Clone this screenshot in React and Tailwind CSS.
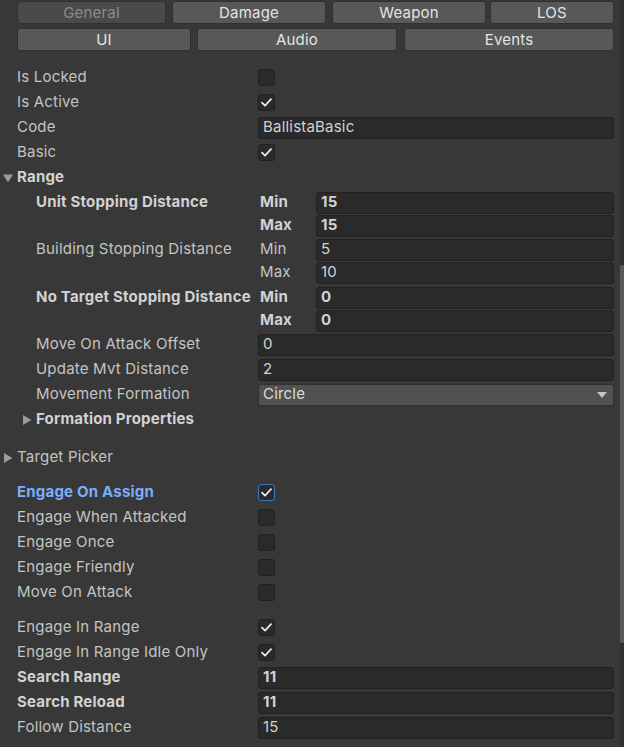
import React from "react";

const font = { fontFamily: "Inter, 'Noto Sans', sans-serif" };

const Check = () => (
  <svg width="11" height="9" viewBox="0 0 11 9" fill="none">
    <path d="M1 4.6 L4 7.6 L10 1.2" stroke="#e8e8e8" strokeWidth="1.8" strokeLinecap="round" strokeLinejoin="round" />
  </svg>
);

const Checkbox = ({ checked, focus }) => (
  <div
    className={`w-[17px] h-[17px] rounded-[3px] flex items-center justify-center bg-[#2a2a2a] border ${
      focus ? "border-[#3a79bb]" : "border-[#212121]"
    }`}
  >
    {checked && <Check />}
  </div>
);

const Field = ({ value, bold }) => (
  <div
    className={`flex-1 h-[22px] rounded-[3px] bg-[#2a2a2a] border border-[#212121] pl-[4px] flex items-center text-[15px] text-[#d2d2d2] ${
      bold ? "font-bold" : ""
    }`}
  >
    {value}
  </div>
);

const Row = ({ label, indent, bold, blue, children }) => (
  <div className="h-[25px] flex items-center">
    <div
      className={`w-[258px] shrink-0 text-[15px] whitespace-nowrap ${indent ? "pl-[36px]" : "pl-[17px]"} ${
        bold ? "font-bold" : ""
      } ${blue ? "text-[#7baefa]" : bold ? "text-[#d2d2d2]" : "text-[#c4c4c4]"}`}
    >
      {label}
    </div>
    <div className="flex-1 flex items-center">{children}</div>
  </div>
);

const Foldout = ({ label, open, indent }) => (
  <div className="h-[25px] flex items-center">
    <div className={`flex items-center ${indent ? "pl-[22px]" : "pl-[3px]"}`}>
      <svg width="10" height="10" viewBox="0 0 10 10" className="mr-[4px]">
        {open ? <path d="M0 1.5 L10 1.5 L5 9.5 Z" fill="#9a9a9a" /> : <path d="M1 0 L9.5 5 L1 10 Z" fill="#9a9a9a" />}
      </svg>
      <span className={`text-[15px] ${open || indent ? "font-bold text-[#d2d2d2]" : "text-[#c4c4c4]"}`}>{label}</span>
    </div>
  </div>
);

const MinMax = ({ label, bold, min, max, top = "pt-[1px]" }) => (
  <div className={`flex flex-col ${top}`}>
    {[
      ["Min", min],
      ["Max", max],
    ].map(([k, v], i) => (
      <div key={k} className="h-[23px] flex items-center">
        <div
          className={`w-[260px] shrink-0 pl-[36px] text-[15px] whitespace-nowrap ${
            bold ? "font-bold text-[#d2d2d2]" : "text-[#c4c4c4]"
          }`}
        >
          {i === 0 ? label : ""}
        </div>
        <div className={`w-[56px] shrink-0 text-[15px] ${bold ? "font-bold text-[#d2d2d2]" : "text-[#c4c4c4]"}`}>{k}</div>
        <Field value={v} bold={bold} />
      </div>
    ))}
  </div>
);

const Btn = ({ label, w, dim }) => (
  <div
    className={`h-[23px] pt-[1px] rounded-[3px] border border-[#303030] flex items-center justify-center text-[15px] shrink-0 ${
      dim ? "bg-[#4a4a4a] text-[#8c8c8c]" : "bg-[#585858] text-[#e4e4e4]"
    }`}
    style={{ width: w }}
  >
    {label}
  </div>
);

export default function App() {
  return (
    <div className="w-[624px] h-[747px] bg-[#383838] flex overflow-hidden tracking-[0.2px]" style={font}>
      <div className="flex-1 pr-[6px]">
        <div className="pt-[1px] pl-[17px] flex flex-col gap-[4px]">
          <div className="flex">
            <Btn label="General" w={149} dim />
            <div className="w-[6px]" />
            <Btn label="Damage" w={154} />
            <div className="w-[6px]" />
            <Btn label="Weapon" w={154} />
            <div className="w-[4px]" />
            <Btn label="LOS" w={124} />
          </div>
          <div className="flex">
            <Btn label="UI" w={174} />
            <div className="w-[6px]" />
            <Btn label="Audio" w={200} />
            <div className="w-[7px]" />
            <Btn label="Events" w={210} />
          </div>
        </div>

        <div className="pt-[14px]">
          <Row label="Is Locked">
            <Checkbox />
          </Row>
          <Row label="Is Active">
            <Checkbox checked />
          </Row>
          <Row label="Code">
            <Field value="BallistaBasic" />
          </Row>
          <Row label="Basic">
            <Checkbox checked />
          </Row>
          <Foldout label="Range" open />
          <MinMax label="Unit Stopping Distance" bold min="15" max="15" />
          <MinMax label="Building Stopping Distance" min="5" max="10" />
          <MinMax label="No Target Stopping Distance" bold min="0" max="0" top="pt-[2px]" />
          <Row label="Move On Attack Offset" indent>
            <Field value="0" />
          </Row>
          <Row label="Update Mvt Distance" indent>
            <Field value="2" />
          </Row>
          <Row label="Movement Formation" indent>
            <div className="flex-1 h-[22px] rounded-[3px] bg-[#515151] border border-[#303030] pl-[4px] pr-[6px] flex items-center justify-between text-[15px] text-[#dcdcdc]">
              <span>Circle</span>
              <svg width="10" height="6" viewBox="0 0 10 6">
                <path d="M0 0 L10 0 L5 6 Z" fill="#c4c4c4" />
              </svg>
            </div>
          </Row>
          <Foldout label="Formation Properties" indent />
          <div className="h-[13px]" />
          <Foldout label="Target Picker" />
          <div className="h-[10px]" />
          <Row label="Engage On Assign" bold blue>
            <Checkbox checked focus />
          </Row>
          <Row label="Engage When Attacked">
            <Checkbox />
          </Row>
          <Row label="Engage Once">
            <Checkbox />
          </Row>
          <Row label="Engage Friendly">
            <Checkbox />
          </Row>
          <Row label="Move On Attack">
            <Checkbox />
          </Row>
          <div className="h-[10px]" />
          <Row label="Engage In Range">
            <Checkbox checked />
          </Row>
          <Row label="Engage In Range Idle Only">
            <Checkbox checked />
          </Row>
          <Row label="Search Range" bold>
            <Field value="11" bold />
          </Row>
          <Row label="Search Reload" bold>
            <Field value="11" bold />
          </Row>
          <Row label="Follow Distance">
            <Field value="15" />
          </Row>
        </div>
      </div>
      <div className="w-[5px] bg-[#323232] shrink-0">
        <div className="mt-[265px] h-[378px] bg-[#5a5a5a] rounded-[2px]" />
      </div>
    </div>
  );
}
